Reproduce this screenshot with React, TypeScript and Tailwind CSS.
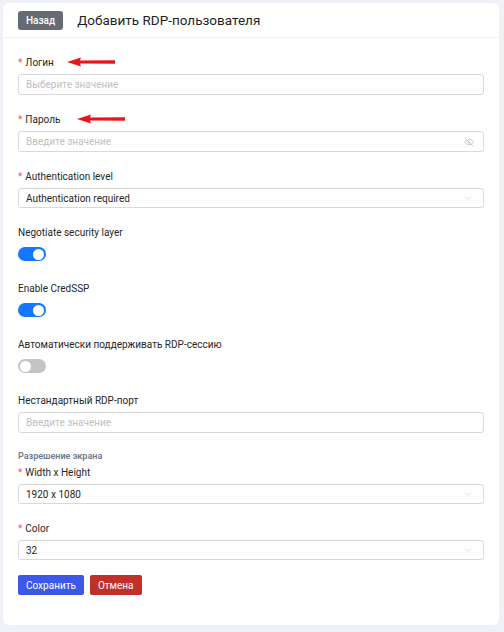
import { ChevronDown, EyeOff } from "lucide-react";
import { ReactNode } from "react";

// red annotation arrow drawn over the label row
function Arrow({ left }: { left: string }) {
    return (
        <svg width="48" height="10" viewBox="0 0 48 10" className={`absolute top-[2px] ${left}`}>
            <path d="M0 5 L14 0.5 L13 3.6 L48 3.2 L48 6.8 L13 6.4 L14 9.5 Z" fill="#e8151b" />
        </svg>
    );
}

function Label({ children, required, arrow }: { children: ReactNode; required?: boolean; arrow?: ReactNode }) {
    return (
        <div className="relative flex items-center h-[14px] mb-[5px] text-[10px] text-[#262626]">
            {required && <span className="text-[#ff4d4f] mr-[3px] text-[10px]">*</span>}
            <span>{children}</span>
            {arrow}
        </div>
    );
}

function Input({ placeholder, icon }: { placeholder: string; icon?: ReactNode }) {
    return (
        <div className="h-[21px] border border-[#d9d9d9] rounded-[3px] bg-white flex items-center px-[7px] text-[10px] text-[#bfbfbf]">
            <span className="flex-1">{placeholder}</span>
            {icon}
        </div>
    );
}

function Select({ value }: { value: string }) {
    return (
        <div className="h-[20px] border border-[#d9d9d9] rounded-[3px] bg-white flex items-center px-[7px] text-[10px] text-[#262626]">
            <span className="flex-1">{value}</span>
            <ChevronDown size={10} strokeWidth={1.2} className="text-[#bfbfbf] mr-[3px]" />
        </div>
    );
}

function Toggle({ on }: { on?: boolean }) {
    return (
        <div className="h-[20px] flex items-center">
            <div className={`w-[28px] h-[14px] rounded-full flex items-center px-[2px] ${on ? "bg-[#1677ff] justify-end" : "bg-[#c4c4c4] justify-start"}`}>
                <div className="w-[11px] h-[11px] rounded-full bg-white" />
            </div>
        </div>
    );
}

export default function App() {
    return (
        <div className="min-h-[632px] bg-[#f0f1f6] p-[3px] pr-[5px] pb-[7px]" style={{ fontFamily: 'Roboto, "Noto Sans", sans-serif' }}>
            <div className="bg-white rounded-[6px] min-h-[622px]">
                {/* Header */}
                <div className="h-[35px] flex items-center px-[15px] border-b border-[#eff0f3] gap-[14px]">
                    <button className="h-[19px] px-[8px] rounded-[3px] bg-[#666b73] text-white text-[10px] font-medium">
                        Назад
                    </button>
                    <h1 className="text-[13.5px] text-[#1f1f1f]">Добавить RDP-пользователя</h1>
                </div>

                <div className="px-[15px] pt-[17px] pb-[30px]">
                    <div className="mb-[17px]">
                        <Label required arrow={<Arrow left="left-[49px]" />}>Логин</Label>
                        <Input placeholder="Выберите значение" />
                    </div>
                    <div className="mb-[17px]">
                        <Label required arrow={<Arrow left="left-[59px]" />}>Пароль</Label>
                        <Input placeholder="Введите значение" icon={<EyeOff size={10} strokeWidth={1.4} className="text-[#a6a6a6] mr-[2px]" />} />
                    </div>
                    <div className="mb-[17px]">
                        <Label required>Authentication level</Label>
                        <Select value="Authentication required" />
                    </div>
                    <div className="mb-[17px]">
                        <Label>Negotiate security layer</Label>
                        <Toggle on />
                    </div>
                    <div className="mb-[17px]">
                        <Label>Enable CredSSP</Label>
                        <Toggle on />
                    </div>
                    <div className="mb-[17px]">
                        <Label>Автоматически поддерживать RDP-сессию</Label>
                        <Toggle />
                    </div>
                    <div className="mb-[17px]">
                        <Label>Нестандартный RDP-порт</Label>
                        <Input placeholder="Введите значение" />
                    </div>

                    {/* Screen resolution */}
                    <div className="text-[9px] font-semibold text-[#6e7a8e] h-[12px] leading-[12px] mb-[3px]">Разрешение экрана</div>
                    <div className="mb-[17px]">
                        <Label required>Width x Height</Label>
                        <Select value="1920 x 1080" />
                    </div>
                    <div className="mb-[15px]">
                        <Label required>Color</Label>
                        <Select value="32" />
                    </div>

                    <div className="flex gap-[6px]">
                        <button className="h-[20px] px-[8px] rounded-[2px] bg-[#3d57ea] text-white text-[10px]">Сохранить</button>
                        <button className="h-[20px] px-[8px] rounded-[2px] bg-[#c1312a] text-white text-[10px]">Отмена</button>
                    </div>
                </div>
            </div>
        </div>
    );
}
